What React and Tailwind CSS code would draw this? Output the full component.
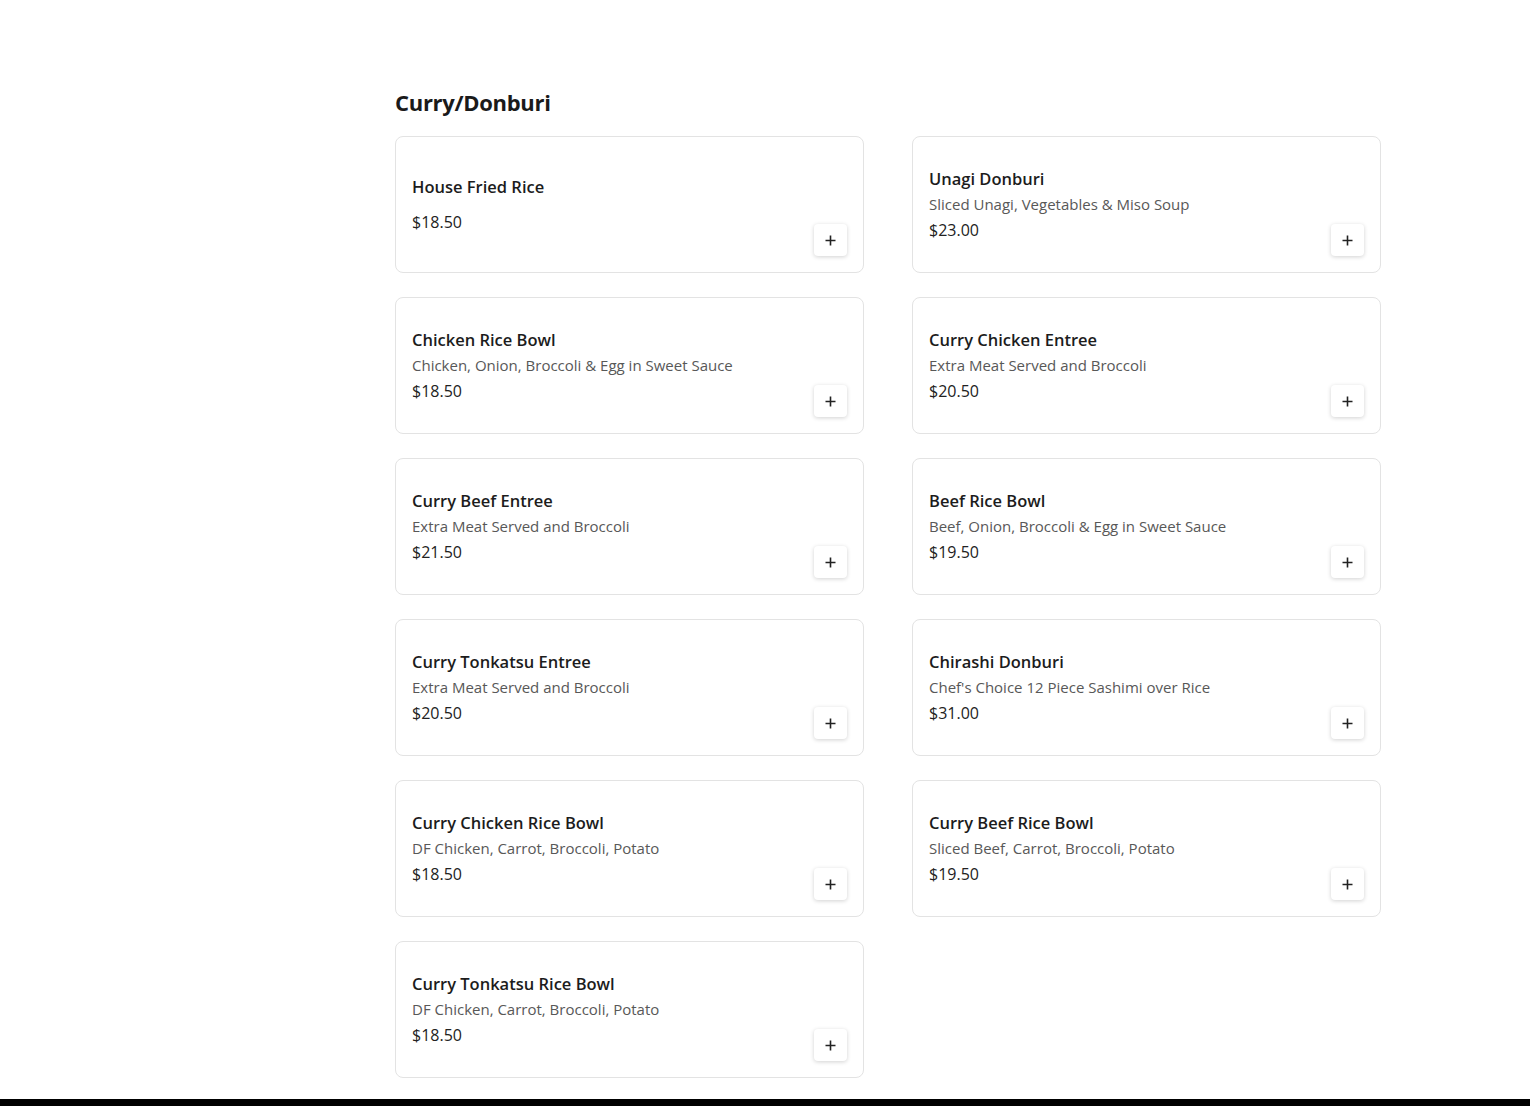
import React from 'react';

const items = [
  { name: 'House Fried Rice', price: '$18.50' },
  { name: 'Unagi Donburi', desc: 'Sliced Unagi, Vegetables & Miso Soup', price: '$23.00' },
  { name: 'Chicken Rice Bowl', desc: 'Chicken, Onion, Broccoli & Egg in Sweet Sauce', price: '$18.50' },
  { name: 'Curry Chicken Entree', desc: 'Extra Meat Served and Broccoli', price: '$20.50' },
  { name: 'Curry Beef Entree', desc: 'Extra Meat Served and Broccoli', price: '$21.50' },
  { name: 'Beef Rice Bowl', desc: 'Beef, Onion, Broccoli & Egg in Sweet Sauce', price: '$19.50' },
  { name: 'Curry Tonkatsu Entree', desc: 'Extra Meat Served and Broccoli', price: '$20.50' },
  { name: 'Chirashi Donburi', desc: "Chef's Choice 12 Piece Sashimi over Rice", price: '$31.00' },
  { name: 'Curry Chicken Rice Bowl', desc: 'DF Chicken, Carrot, Broccoli, Potato', price: '$18.50' },
  { name: 'Curry Beef Rice Bowl', desc: 'Sliced Beef, Carrot, Broccoli, Potato', price: '$19.50' },
  { name: 'Curry Tonkatsu Rice Bowl', desc: 'DF Chicken, Carrot, Broccoli, Potato', price: '$18.50' },
];

function MenuCard({ item }) {
  return (
    <div className="relative h-[137px] rounded-lg border border-[#e3e3e3] bg-white px-4 flex flex-col justify-center">
      <h3 className={`text-[16.5px] font-semibold text-[#1c1c1c] leading-[22px] ${item.desc ? '' : 'mb-[8px]'}`}>{item.name}</h3>
      {item.desc && (
        <p className="text-[15px] text-[#585858] leading-[20px] mt-[4px]">{item.desc}</p>
      )}
      <p className="text-[16px] text-[#222] leading-[22px] mt-[5px]">{item.price}</p>

      {/* add button */}
      <button className="absolute right-4 bottom-4 w-[33px] h-[32px] rounded bg-white shadow-[0_1px_4px_rgba(0,0,0,0.18)] flex items-center justify-center">
        <svg width="11" height="11" viewBox="0 0 11 11" fill="none" stroke="#222" strokeWidth="1.6">
          <path d="M5.5 0.5v10M0.5 5.5h10" />
        </svg>
      </button>
    </div>
  );
}

export default function App() {
  return (
    <div className="min-h-screen bg-white flex flex-col" style={{ fontFamily: '"Open Sans", "Noto Sans", sans-serif' }}>
      <main className="flex-1 pt-[88px] pb-[21px]">
        <section className="ml-[395px] w-[986px]">
          <h2 className="text-[22px] font-bold text-[#1a1a1a] leading-[28px] mb-[20px] tracking-[-0.3px]">Curry/Donburi</h2>
          <div className="grid grid-cols-2 gap-x-[48px] gap-y-[24px]">
            {items.map((item) => (
              <MenuCard key={item.name} item={item} />
            ))}
          </div>
        </section>
      </main>
      <footer className="h-[120px] bg-black" />
    </div>
  );
}
